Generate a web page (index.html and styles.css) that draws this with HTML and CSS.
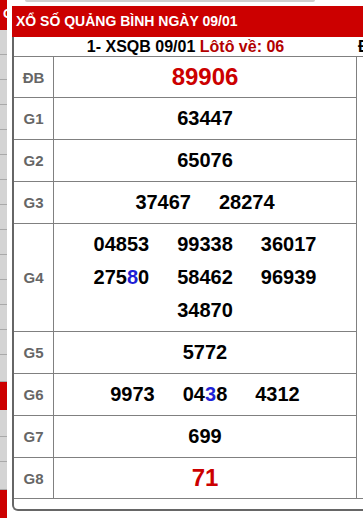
FILE: index.html
```html
<!DOCTYPE html>
<html lang="vi">
<head>
<meta charset="utf-8">
<title>XSQB</title>
<link rel="stylesheet" href="styles.css">
</head>
<body>
<div class="page">
  <aside class="side">
    <div class="si si-top">G</div>
    <div class="si"></div><div class="si"></div><div class="si"></div><div class="si"></div>
    <div class="si"></div><div class="si"></div><div class="si"></div><div class="si"></div>
    <div class="si"></div><div class="si"></div><div class="si"></div><div class="si"></div>
    <div class="si"></div>
    <div class="si si-27"></div>
    <div class="si si-red"></div>
    <div class="si si-27"></div>
    <div class="si"></div>
    <div class="si si-28"></div>
    <div class="si si-red"></div>
  </aside>
  <main class="main">
    <div class="topline"></div>
    <div class="title">XỔ SỐ QUẢNG BÌNH NGÀY 09/01</div>
    <div class="box">
      <table class="kq">
        <colgroup><col class="c1"><col class="c2"><col class="c3"></colgroup>
        <tr class="head"><td colspan="2">1- XSQB 09/01 <span class="loto">Lôtô về: 06</span></td><td class="dau">Đầu</td></tr>
        <tr><td class="lbl">ĐB</td><td class="num tight"><div class="nums"><span class="big">89906</span></div></td><td class="x"></td></tr>
        <tr><td class="lbl">G1</td><td class="num"><div class="nums"><span>63447</span></div></td><td class="x"></td></tr>
        <tr><td class="lbl">G2</td><td class="num"><div class="nums"><span>65076</span></div></td><td class="x"></td></tr>
        <tr><td class="lbl">G3</td><td class="num"><div class="nums"><span>37467</span><span>28274</span></div></td><td class="x"></td></tr>
        <tr><td class="lbl">G4</td><td class="num"><div class="nums three"><span>04853</span><span>99338</span><span>36017</span><span>275<b class="blue">8</b>0</span><span>58462</span><span>96939</span><span>34870</span></div></td><td class="x"></td></tr>
        <tr><td class="lbl">G5</td><td class="num"><div class="nums"><span>5772</span></div></td><td class="x"></td></tr>
        <tr><td class="lbl">G6</td><td class="num"><div class="nums"><span>9973</span><span>04<b class="blue">3</b>8</span><span>4312</span></div></td><td class="x"></td></tr>
        <tr><td class="lbl">G7</td><td class="num"><div class="nums"><span>699</span></div></td><td class="x"></td></tr>
        <tr class="last"><td class="lbl">G8</td><td class="num tight"><div class="nums"><span class="big">71</span></div></td><td class="x"></td></tr>
      </table>
    </div>
  </main>
</div>
</body>
</html>
```

FILE: styles.css
```css
html, body {
  margin: 0;
  padding: 0;
  background: #fff;
}
body {
  width: 363px;
  height: 521px;
  overflow: hidden;
  font-family: "Liberation Sans", Arial, sans-serif;
  color: #000;
}
.page {
  display: flex;
  align-items: flex-start;
}
.side {
  flex: none;
  width: 7px;
  overflow: hidden;
}
.si {
  height: 24px;
  border-bottom: 1px solid #a9a9a9;
  background: #d4d4d4;
}
.si-top {
  height: 30px;
  border-bottom: none;
  background: #cc0000;
  color: #fff;
  font-weight: bold;
  font-size: 13px;
  line-height: 28px;
  padding-left: 3px;
  box-sizing: border-box;
  white-space: nowrap;
}
.si-27 { height: 26px; }
.si-28 { height: 27px; }
.si-red {
  height: 28px;
  border-bottom: none;
  background: #cc0000;
}
.main {
  flex: none;
  width: 560px;
  margin-left: 5px;
}
.topline {
  width: 290px;
  height: 2px;
  margin-left: 13px;
  background: #cfcfcf;
  border-radius: 0 0 2px 2px;
}
.title {
  margin-top: 4px;
  height: 31px;
  line-height: 31px;
  padding-left: 4px;
  background: #cc0000;
  color: #fff;
  font-weight: bold;
  font-size: 14px;
  white-space: nowrap;
}
.box {
  border-left: 2px solid #666;
  border-bottom: 2px solid #666;
  border-bottom-left-radius: 6px;
  padding-bottom: 10px;
}
.kq {
  border-collapse: separate;
  border-spacing: 0;
  table-layout: fixed;
  width: 543px;
}
.c1 { width: 40px; }
.c2 { width: 303px; }
.c3 { width: 200px; }
.kq td {
  padding: 0;
  text-align: center;
  vertical-align: middle;
}
.head td {
  line-height: 19px;
  font-size: 16px;
  font-weight: bold;
  border-bottom: 1px solid #808080;
  white-space: nowrap;
}
.head td.dau {
  text-align: left;
  padding-left: 1px;
}
.loto { color: #b30000; }
.kq td.lbl {
  border-right: 1px solid #808080;
  border-bottom: 1px solid #808080;
  color: #666;
  font-weight: bold;
  font-size: 15px;
}
.kq td.num {
  border-right: 1px solid #808080;
  border-bottom: 1px solid #808080;
  padding: 4px 0;
}
.kq td.num.tight {
  padding: 3px 0 4px;
}
.last td.x {
  border-bottom: 1px solid #808080;
}
.nums {
  display: flex;
  flex-wrap: wrap;
  justify-content: center;
  column-gap: 28px;
  line-height: 33px;
  font-size: 20px;
  font-weight: bold;
}
.nums.three {
  width: 224px;
  margin: 0 auto;
}
.nums .big {
  color: #cc0000;
  font-size: 24px;
}
.blue {
  color: #1f1fd6;
}
```
